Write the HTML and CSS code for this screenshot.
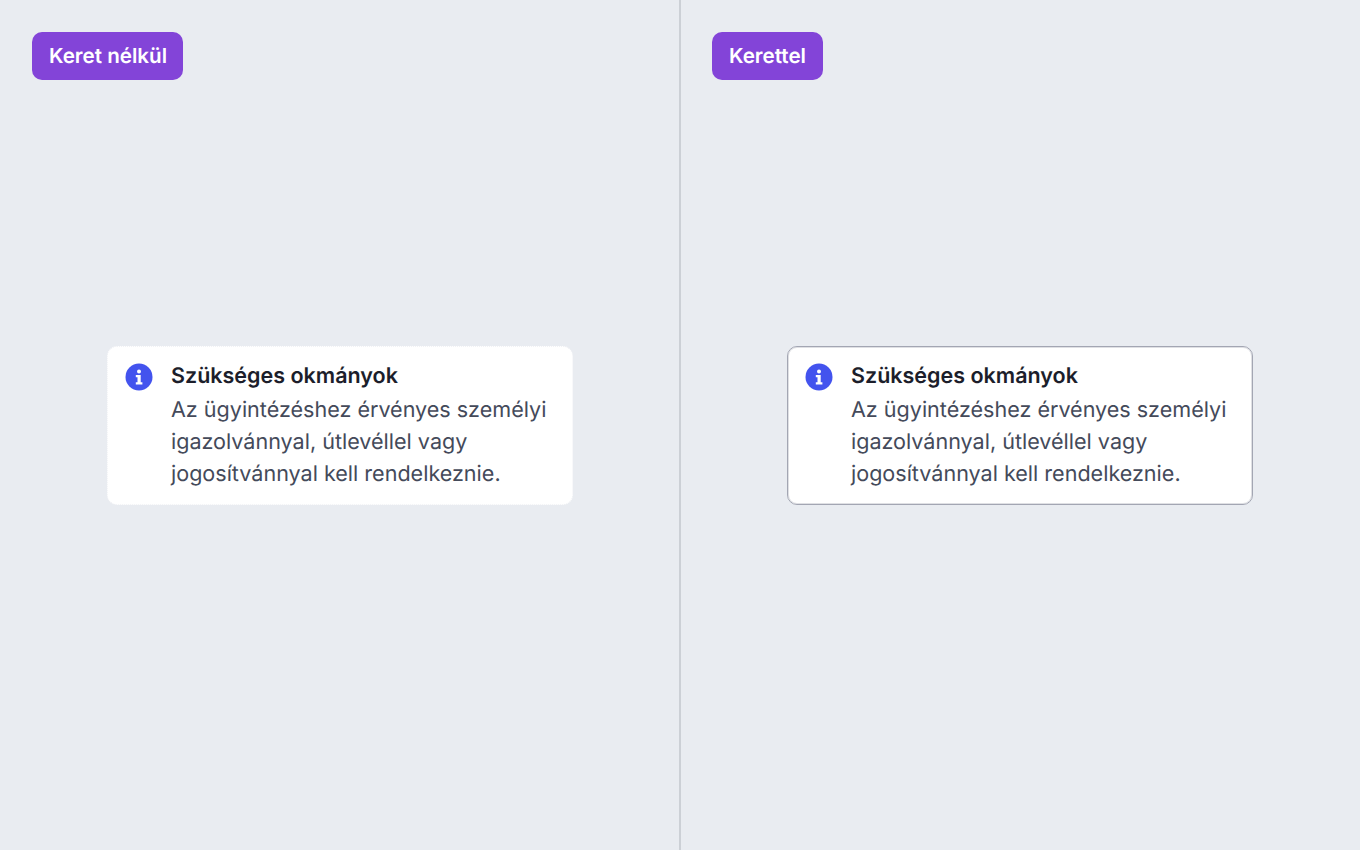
FILE: index.html
```html
<!DOCTYPE html>
<html lang="hu">
<head>
<meta charset="utf-8">
<title>Szükséges okmányok</title>
<link rel="stylesheet" href="styles.css">
</head>
<body>
<main class="split">
  <section class="pane pane-left">
    <span class="tag">Keret nélkül</span>
    <div class="notice notice-plain">
      <svg class="icon" viewBox="0 0 28 28" aria-hidden="true"><circle cx="14" cy="14" r="13.5" fill="#4353ee"/><circle cx="14" cy="8.4" r="2" fill="#fff"/><path d="M10.8 12h4.9v7.2h1.7v2.3h-6.6v-2.3h1.7v-4.9h-1.7z" fill="#fff"/></svg>
      <div class="copy">
        <h2 class="title">Szükséges okmányok</h2>
        <p class="body">Az ügyintézéshez érvényes személyi igazolvánnyal, útlevéllel vagy jogosítvánnyal kell rendelkeznie.</p>
      </div>
    </div>
  </section>
  <section class="pane">
    <span class="tag tag-short">Kerettel</span>
    <div class="notice notice-bordered">
      <svg class="icon" viewBox="0 0 28 28" aria-hidden="true"><circle cx="14" cy="14" r="13.5" fill="#4353ee"/><circle cx="14" cy="8.4" r="2" fill="#fff"/><path d="M10.8 12h4.9v7.2h1.7v2.3h-6.6v-2.3h1.7v-4.9h-1.7z" fill="#fff"/></svg>
      <div class="copy">
        <h2 class="title">Szükséges okmányok</h2>
        <p class="body">Az ügyintézéshez érvényes személyi igazolvánnyal, útlevéllel vagy jogosítvánnyal kell rendelkeznie.</p>
      </div>
    </div>
  </section>
</main>
</body>
</html>
```
FILE: styles.css
```css
* { box-sizing: border-box; }
html, body { margin: 0; height: 100%; }
body { background: #e9ecf1; font-family: Inter, "Liberation Sans", sans-serif; text-rendering: geometricPrecision; overflow: hidden; }
.split { display: grid; grid-template-columns: 680px 680px; height: 850px; }
.pane { position: relative; height: 850px; display: flex; align-items: center; justify-content: center; }
.pane-left::after { content: ""; position: absolute; top: 0; bottom: 0; right: -1px; width: 2px; background: #ccd0d6; }
.tag {
  position: absolute; left: 32px; top: 32px;
  height: 48px; padding: 0 16px 2px 17px;
  display: flex; align-items: center;
  background: #8344d8; color: #fff; border-radius: 10px;
  font-size: 20.6px; font-weight: 600; white-space: nowrap;
}
.tag-short { padding-right: 16.5px; }
.notice {
  width: 466px; height: 159px; padding: 15px 17px 14px;
  display: flex; gap: 18px; align-items: flex-start;
  background: #fff; border-radius: 10px;
}
.notice-plain { border: 1px dotted #f1f2f5; }
.notice-bordered { border: 1px solid #a3a6b3; box-shadow: inset 0 0 0 1px rgba(163, 166, 179, 0.35); }
.icon { width: 28px; height: 28px; flex: none; margin-top: 1px; }
.copy { min-width: 0; }
.title { margin: 0 0 4px; font-size: 21.5px; line-height: 28px; font-weight: 600; color: #1c1e2b; }
.body { margin: 0; font-size: 21.55px; line-height: 32px; font-weight: 400; color: #444a5a; }
```
